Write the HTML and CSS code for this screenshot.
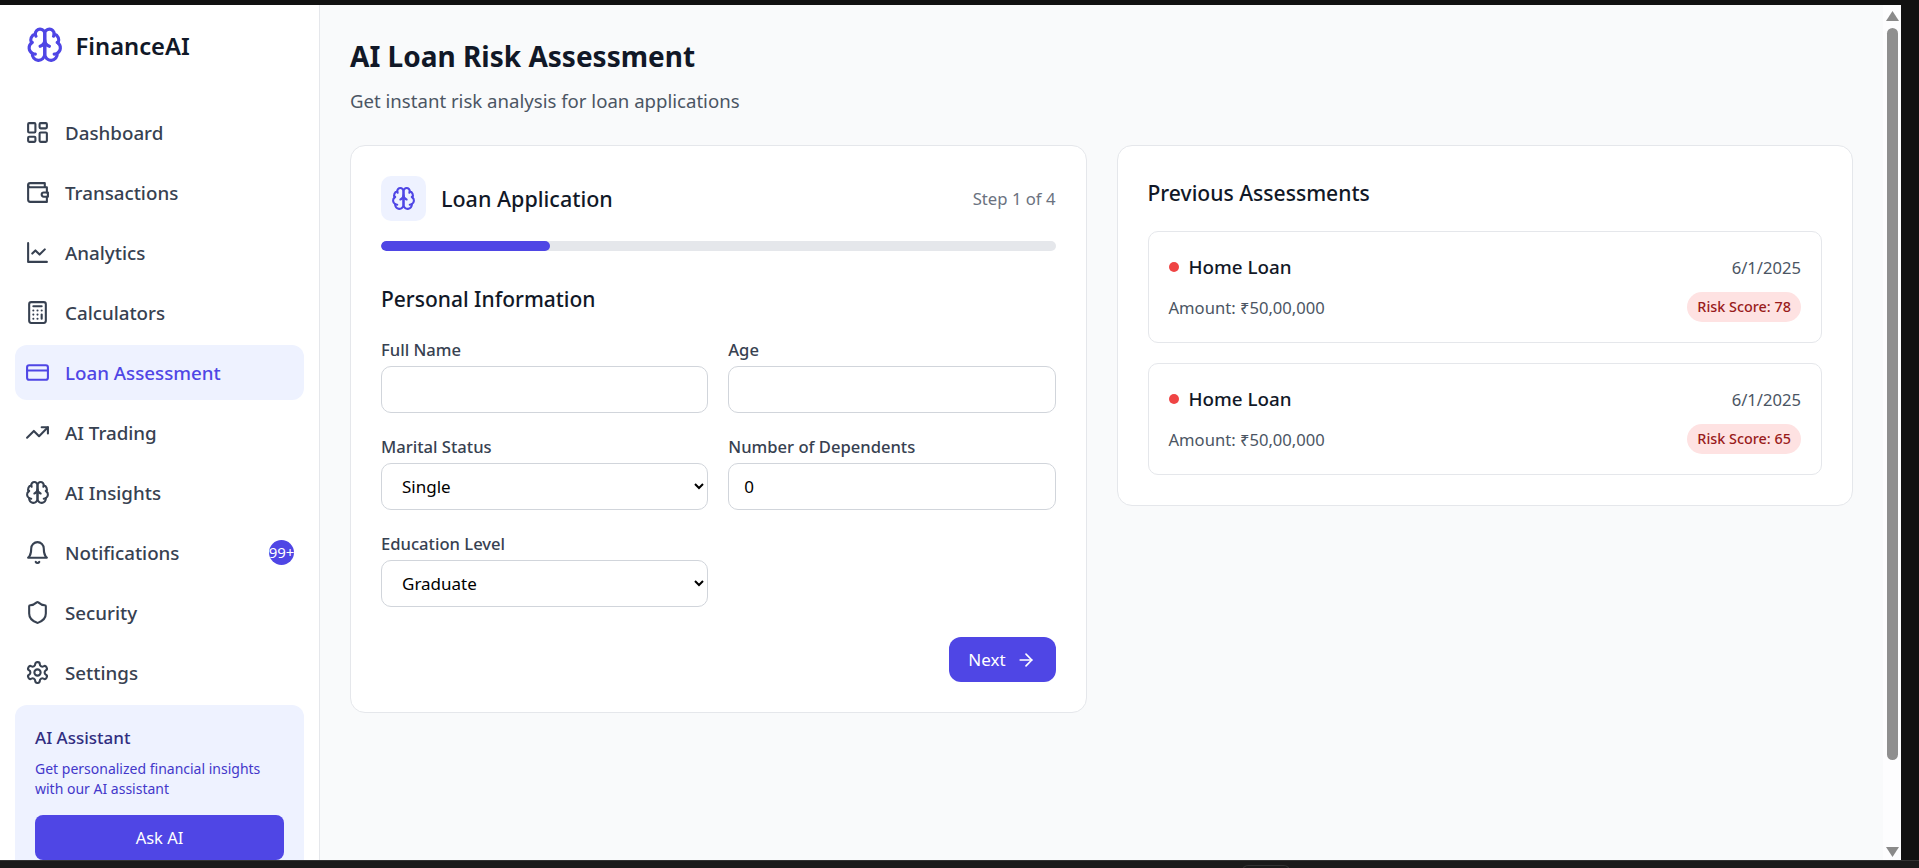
FILE: index.html
```html
<!DOCTYPE html>
<html lang="en">
<head>
<meta charset="utf-8">
<title>FinanceAI</title>
<link rel="stylesheet" href="styles.css">
</head>
<body>
<svg class="defs" width="0" height="0" aria-hidden="true">
  <symbol id="i-brain" viewBox="0 0 24 24">
    <path d="M12 5a3 3 0 1 0-5.997.125 4 4 0 0 0-2.526 5.77 4 4 0 0 0 .556 6.588A4 4 0 1 0 12 18Z"/>
    <path d="M12 5a3 3 0 1 1 5.997.125 4 4 0 0 1 2.526 5.77 4 4 0 0 1-.556 6.588A4 4 0 1 1 12 18Z"/>
    <path d="M15 13a4.5 4.5 0 0 1-3-4 4.5 4.5 0 0 1-3 4"/>
    <path d="M17.599 6.5a3 3 0 0 0 .399-1.375"/>
    <path d="M6.003 5.125A3 3 0 0 0 6.401 6.5"/>
    <path d="M3.477 10.896a4 4 0 0 1 .585-.396"/>
    <path d="M19.938 10.5a4 4 0 0 1 .585.396"/>
    <path d="M6 18a4 4 0 0 1-1.967-.516"/>
    <path d="M19.967 17.484A4 4 0 0 1 18 18"/>
  </symbol>
</svg>
<div class="window">
  <aside class="sidebar">
    <div class="brand">
      <svg class="brand-icon"><use href="#i-brain"/></svg>
      <span class="brand-name">FinanceAI</span>
    </div>
    <nav class="nav">
      <a class="nav-item">
        <svg class="icon" viewBox="0 0 24 24"><rect width="7" height="9" x="3" y="3" rx="1"/><rect width="7" height="5" x="14" y="3" rx="1"/><rect width="7" height="9" x="14" y="12" rx="1"/><rect width="7" height="5" x="3" y="16" rx="1"/></svg>
        <span>Dashboard</span>
      </a>
      <a class="nav-item">
        <svg class="icon" viewBox="0 0 24 24"><path d="M21 12V7H5a2 2 0 0 1 0-4h14v4"/><path d="M3 5v14a2 2 0 0 0 2 2h16v-5"/><path d="M18 12a2 2 0 0 0 0 4h4v-4Z"/></svg>
        <span>Transactions</span>
      </a>
      <a class="nav-item">
        <svg class="icon" viewBox="0 0 24 24"><path d="M3 3v18h18"/><path d="m19 9-5 5-4-4-3 3"/></svg>
        <span>Analytics</span>
      </a>
      <a class="nav-item">
        <svg class="icon" viewBox="0 0 24 24"><rect width="16" height="20" x="4" y="2" rx="2"/><line x1="8" x2="16" y1="6" y2="6"/><line x1="16" x2="16" y1="14" y2="18"/><path d="M16 10h.01"/><path d="M12 10h.01"/><path d="M8 10h.01"/><path d="M12 14h.01"/><path d="M8 14h.01"/><path d="M12 18h.01"/><path d="M8 18h.01"/></svg>
        <span>Calculators</span>
      </a>
      <a class="nav-item nav-item-active">
        <svg class="icon" viewBox="0 0 24 24"><rect width="20" height="14" x="2" y="5" rx="2"/><line x1="2" x2="22" y1="10" y2="10"/></svg>
        <span>Loan Assessment</span>
      </a>
      <a class="nav-item">
        <svg class="icon" viewBox="0 0 24 24"><polyline points="22 7 13.5 15.5 8.5 10.5 2 17"/><polyline points="16 7 22 7 22 13"/></svg>
        <span>AI Trading</span>
      </a>
      <a class="nav-item">
        <svg class="icon"><use href="#i-brain"/></svg>
        <span>AI Insights</span>
      </a>
      <a class="nav-item">
        <svg class="icon" viewBox="0 0 24 24"><path d="M6 8a6 6 0 0 1 12 0c0 7 3 9 3 9H3s3-2 3-9"/><path d="M10.3 21a1.94 1.94 0 0 0 3.4 0"/></svg>
        <span>Notifications</span>
        <span class="nav-badge">99+</span>
      </a>
      <a class="nav-item">
        <svg class="icon" viewBox="0 0 24 24"><path d="M20 13c0 5-3.5 7.5-7.66 8.95a1 1 0 0 1-.67-.01C7.5 20.5 4 18 4 13V6a1 1 0 0 1 1-1c2 0 4.5-1.2 6.24-2.72a1.17 1.17 0 0 1 1.52 0C14.51 3.81 17 5 19 5a1 1 0 0 1 1 1z"/></svg>
        <span>Security</span>
      </a>
      <a class="nav-item">
        <svg class="icon" viewBox="0 0 24 24"><path d="M12.22 2h-.44a2 2 0 0 0-2 2v.18a2 2 0 0 1-1 1.73l-.43.25a2 2 0 0 1-2 0l-.15-.08a2 2 0 0 0-2.73.73l-.22.38a2 2 0 0 0 .73 2.73l.15.1a2 2 0 0 1 1 1.72v.51a2 2 0 0 1-1 1.74l-.15.09a2 2 0 0 0-.73 2.73l.22.38a2 2 0 0 0 2.73.73l.15-.08a2 2 0 0 1 2 0l.43.25a2 2 0 0 1 1 1.73V20a2 2 0 0 0 2 2h.44a2 2 0 0 0 2-2v-.18a2 2 0 0 1 1-1.73l.43-.25a2 2 0 0 1 2 0l.15.08a2 2 0 0 0 2.73-.73l.22-.39a2 2 0 0 0-.73-2.73l-.15-.08a2 2 0 0 1-1-1.74v-.5a2 2 0 0 1 1-1.74l.15-.09a2 2 0 0 0 .73-2.73l-.22-.38a2 2 0 0 0-2.73-.73l-.15.08a2 2 0 0 1-2 0l-.43-.25a2 2 0 0 1-1-1.73V4a2 2 0 0 0-2-2z"/><circle cx="12" cy="12" r="3"/></svg>
        <span>Settings</span>
      </a>
    </nav>
    <section class="assistant">
      <h3 class="assistant-title">AI Assistant</h3>
      <p class="assistant-text">Get personalized financial insights with our AI assistant</p>
      <button class="assistant-btn" type="button">Ask AI</button>
    </section>
  </aside>

  <main class="main">
    <h1 class="page-title">AI Loan Risk Assessment</h1>
    <p class="page-sub">Get instant risk analysis for loan applications</p>
    <div class="columns">
      <section class="card">
        <div class="card-head">
          <div class="head-left">
            <span class="tile"><svg class="tile-icon"><use href="#i-brain"/></svg></span>
            <h2 class="card-title">Loan Application</h2>
          </div>
          <span class="step">Step 1 of 4</span>
        </div>
        <div class="progress"><div class="progress-fill"></div></div>
        <h3 class="section-title">Personal Information</h3>
        <form class="form">
          <div class="field">
            <label class="label">Full Name</label>
            <input class="control" type="text">
          </div>
          <div class="field">
            <label class="label">Age</label>
            <input class="control" type="number">
          </div>
          <div class="field">
            <label class="label">Marital Status</label>
            <select class="control control-select"><option>Single</option><option>Married</option></select>
          </div>
          <div class="field">
            <label class="label">Number of Dependents</label>
            <input class="control" type="number" value="0">
          </div>
          <div class="field">
            <label class="label">Education Level</label>
            <select class="control control-select"><option>Graduate</option><option>Postgraduate</option></select>
          </div>
        </form>
        <div class="actions">
          <button class="next-btn" type="button">Next
            <svg class="next-icon" viewBox="0 0 24 24"><path d="M5 12h14"/><path d="m12 5 7 7-7 7"/></svg>
          </button>
        </div>
      </section>

      <section class="card card-history">
        <h2 class="history-title">Previous Assessments</h2>
        <div class="history">
          <article class="item">
            <div class="item-row item-top">
              <div class="item-name"><span class="dot"></span><span>Home Loan</span></div>
              <span class="item-date">6/1/2025</span>
            </div>
            <div class="item-row">
              <span class="item-amount">Amount: ₹50,00,000</span>
              <span class="risk">Risk Score: 78</span>
            </div>
          </article>
          <article class="item">
            <div class="item-row item-top">
              <div class="item-name"><span class="dot"></span><span>Home Loan</span></div>
              <span class="item-date">6/1/2025</span>
            </div>
            <div class="item-row">
              <span class="item-amount">Amount: ₹50,00,000</span>
              <span class="risk">Risk Score: 65</span>
            </div>
          </article>
        </div>
      </section>
    </div>
  </main>

  <div class="scrollbar">
    <svg class="sb-arrow" viewBox="0 0 13 10"><polygon points="6.5,0 13,10 0,10"/></svg>
    <div class="sb-thumb"></div>
    <svg class="sb-arrow sb-arrow-down" viewBox="0 0 13 10"><polygon points="0,0 13,0 6.5,10"/></svg>
  </div>
</div>
<div class="taskbar"><span class="taskbar-tab"></span></div>
</body>
</html>
```

FILE: styles.css
```css
* { box-sizing: border-box; }

html, body {
  margin: 0;
  height: 100%;
  overflow: hidden;
}

body {
  background: #111111;
  padding-top: 5px;
  font-family: "Noto Sans", "Open Sans", sans-serif;
  color: #111827;
}

.defs { position: absolute; }

symbol { fill: none; }

.window {
  display: flex;
  width: 1901px;
  height: 855px;
  overflow: hidden;
  background: #f9fafb;
}

.sidebar {
  flex: 0 0 320px;
  height: 855px;
  overflow: hidden;
  background: #ffffff;
  border-right: 1px solid #e5e7eb;
  padding: 21px 15px 0;
}

.brand {
  display: flex;
  align-items: center;
  gap: 12px;
  padding-left: 11px;
  height: 38px;
  margin-bottom: 41px;
}

.brand-icon {
  width: 37.5px;
  height: 37.5px;
  fill: none;
  stroke: #4f46e5;
  stroke-width: 2;
  stroke-linecap: round;
  stroke-linejoin: round;
}

.brand-name {
  margin-top: 2px;
  font-size: 23.75px;
  line-height: 38px;
  font-weight: 600;
  color: #111827;
}

.nav {
  display: flex;
  flex-direction: column;
  gap: 5px;
}

.nav-item {
  display: flex;
  align-items: center;
  gap: 15px;
  height: 55px;
  padding: 0 10px;
  border-radius: 12px;
  font-size: 18.75px;
  font-weight: 500;
  color: #374151;
}

.nav-item-active {
  background: #eef2ff;
  color: #4f46e5;
}

.icon {
  flex: none;
  width: 25px;
  height: 25px;
  fill: none;
  stroke: currentColor;
  stroke-width: 2;
  stroke-linecap: round;
  stroke-linejoin: round;
}

.nav-badge {
  display: flex;
  justify-content: center;
  width: 25px;
  height: 25px;
  margin-left: auto;
  border-radius: 50%;
  background: #4f46e5;
  color: #ffffff;
  font-size: 15px;
  font-weight: 400;
  line-height: 25px;
  white-space: nowrap;
}

.assistant {
  margin-top: 5px;
  padding: 20px;
  height: 200px;
  border-radius: 12px;
  background: #eef2ff;
}

.assistant-title {
  margin: 0 0 8px;
  font-size: 17px;
  line-height: 26px;
  font-weight: 500;
  color: #312e81;
}

.assistant-text {
  margin: 0 0 16px;
  font-size: 14px;
  line-height: 20px;
  color: #4338ca;
}

.assistant-btn {
  display: block;
  width: 100%;
  height: 45px;
  border: 0;
  border-radius: 8px;
  background: #4f46e5;
  color: #ffffff;
  font-family: inherit;
  font-size: 16.5px;
}

.main {
  flex: 1;
  min-width: 0;
  padding: 30px;
}

.page-title {
  margin: 0;
  font-size: 28px;
  line-height: 42px;
  font-weight: 700;
  color: #111827;
}

.page-sub {
  margin: 11px 0 0;
  font-size: 18.6px;
  line-height: 25px;
  color: #4b5563;
}

.columns {
  display: grid;
  grid-template-columns: 1fr 1fr;
  gap: 30px;
  align-items: start;
  margin-top: 32px;
}

.card {
  background: #ffffff;
  border: 1px solid #e5e7eb;
  border-radius: 15px;
  padding: 30px;
}

.card-head {
  display: flex;
  align-items: center;
  justify-content: space-between;
}

.head-left {
  display: flex;
  align-items: center;
  gap: 15px;
}

.tile {
  display: flex;
  align-items: center;
  justify-content: center;
  width: 45px;
  height: 45px;
  border-radius: 10px;
  background: #eef2ff;
}

.tile-icon {
  width: 25px;
  height: 25px;
  fill: none;
  stroke: #4f46e5;
  stroke-width: 2;
  stroke-linecap: round;
  stroke-linejoin: round;
}

.card-title {
  margin: 0;
  font-size: 21.5px;
  font-weight: 500;
  color: #111827;
}

.step {
  font-size: 16.7px;
  color: #6b7280;
}

.progress {
  height: 10px;
  margin-top: 20px;
  border-radius: 5px;
  background: #e5e7eb;
  overflow: hidden;
}

.progress-fill {
  width: 25%;
  height: 100%;
  border-radius: 5px;
  background: #4f46e5;
}

.section-title {
  margin: 33px 0 24px;
  font-size: 21px;
  line-height: 30px;
  font-weight: 500;
  color: #111827;
}

.form {
  display: grid;
  grid-template-columns: 1fr 1fr;
  column-gap: 20px;
  row-gap: 22px;
}

.label {
  display: block;
  margin-bottom: 5px;
  font-size: 16.6px;
  line-height: 23px;
  font-weight: 500;
  color: #374151;
}

.control {
  display: block;
  width: 100%;
  height: 47px;
  padding: 0 15px;
  border: 1px solid #d1d5db;
  border-radius: 10px;
  background: #ffffff;
  font-family: inherit;
  font-size: 17px;
  color: #000000;
}

.control-select { padding-left: 16px; }

.actions {
  display: flex;
  justify-content: flex-end;
  margin-top: 30px;
}

.next-btn {
  display: flex;
  align-items: center;
  gap: 10px;
  height: 45px;
  width: 107px;
  justify-content: center;
  padding: 0;
  border: 0;
  border-radius: 12px;
  background: #4f46e5;
  color: #ffffff;
  font-family: inherit;
  font-size: 17px;
}

.next-icon {
  width: 20px;
  height: 20px;
  fill: none;
  stroke: currentColor;
  stroke-width: 2;
  stroke-linecap: round;
  stroke-linejoin: round;
}

.history-title {
  margin: 0 0 21px;
  font-size: 21.1px;
  line-height: 34px;
  font-weight: 500;
  color: #111827;
}

.history {
  display: flex;
  flex-direction: column;
  gap: 20px;
}

.item {
  border: 1px solid #e5e7eb;
  border-radius: 10px;
  padding: 20px;
}

.item-row {
  display: flex;
  align-items: center;
  justify-content: space-between;
}

.item-top {
  height: 30px;
  margin-bottom: 10px;
}

.item-name {
  display: flex;
  align-items: center;
  gap: 10px;
  font-size: 18.8px;
  font-weight: 500;
  color: #111827;
}

.dot {
  width: 10px;
  height: 10px;
  border-radius: 50%;
  background: #ef4444;
}

.item-date,
.item-amount {
  font-size: 16.6px;
  color: #4b5563;
}

.risk {
  height: 30px;
  padding: 0 10px;
  border-radius: 15px;
  background: #fee2e2;
  color: #991b1b;
  font-size: 14.4px;
  font-weight: 500;
  line-height: 30px;
}

.scrollbar {
  flex: 0 0 18px;
  display: flex;
  flex-direction: column;
  align-items: center;
  padding: 6px 0 3px;
  background: #fdfdfe;
}

.sb-arrow {
  flex: none;
  width: 13px;
  height: 10px;
  fill: #8a8a8a;
}

.sb-thumb {
  width: 11px;
  height: 732px;
  margin-top: 7px;
  border-radius: 6px;
  background: #8f8f8f;
}

.sb-arrow-down { margin-top: auto; }

.taskbar {
  position: relative;
  height: 8px;
  border-top: 1px solid #333333;
  background: #1a1a1a;
}

.taskbar-tab {
  position: absolute;
  left: 1242px;
  top: 4px;
  width: 48px;
  height: 6px;
  border: 1px solid #333333;
  border-radius: 6px 6px 0 0;
}
```
